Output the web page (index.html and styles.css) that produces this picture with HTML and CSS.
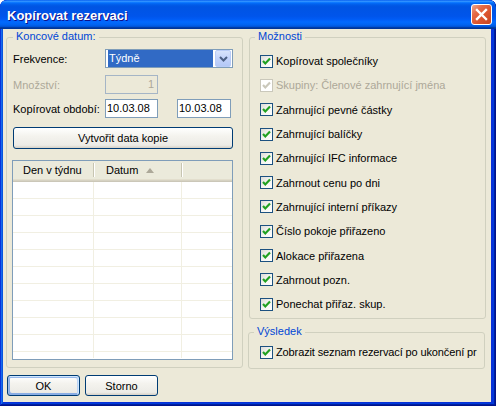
FILE: index.html
```html
<!DOCTYPE html>
<html lang="cs">
<head>
<meta charset="utf-8">
<title>Kopírovat rezervaci</title>
<link rel="stylesheet" href="styles.css">
</head>
<body>
<div class="window">
  <div class="titlebar">
    <span class="title">Kopírovat rezervaci</span>
    <span class="close">
      <svg width="13" height="13" viewBox="0 0 13 13"><path d="M2 2 L11 11 M11 2 L2 11" stroke="#fff" stroke-width="2.4" stroke-linecap="square"/></svg>
    </span>
  </div>
  <div class="client">
    <div class="top">
      <div class="group group-left">
        <span class="legend">Koncové datum:</span>
        <div class="row row-freq">
          <span class="lbl">Frekvence:</span>
          <div class="combo">
            <span class="combo-value">Týdně</span>
            <span class="combo-btn"><svg width="9" height="6" viewBox="0 0 9 6"><path d="M1 1 L4.5 4.5 L8 1" fill="none" stroke="#4D6185" stroke-width="2"/></svg></span>
          </div>
        </div>
        <div class="row row-qty">
          <span class="lbl disabled">Množství:</span>
          <div class="input input-disabled">1</div>
        </div>
        <div class="row row-period">
          <span class="lbl">Kopírovat období:</span>
          <div class="input">10.03.08</div>
          <div class="input input2">10.03.08</div>
        </div>
        <div class="btn btn-wide">Vytvořit data kopie</div>
        <div class="list">
          <div class="list-head">
            <span class="hc hc1">Den v týdnu</span><span class="hsep"></span>
            <span class="hc hc2">Datum<span class="sort"></span></span><span class="hsep"></span>
            <span class="hc hc3"></span>
          </div>
          <div class="list-body">
            <div class="lr"><span class="c1"></span><span class="c2"></span><span class="c3"></span></div>
            <div class="lr"><span class="c1"></span><span class="c2"></span><span class="c3"></span></div>
            <div class="lr"><span class="c1"></span><span class="c2"></span><span class="c3"></span></div>
            <div class="lr"><span class="c1"></span><span class="c2"></span><span class="c3"></span></div>
            <div class="lr"><span class="c1"></span><span class="c2"></span><span class="c3"></span></div>
            <div class="lr"><span class="c1"></span><span class="c2"></span><span class="c3"></span></div>
            <div class="lr"><span class="c1"></span><span class="c2"></span><span class="c3"></span></div>
            <div class="lr"><span class="c1"></span><span class="c2"></span><span class="c3"></span></div>
            <div class="lr"><span class="c1"></span><span class="c2"></span><span class="c3"></span></div>
            <div class="lr"><span class="c1"></span><span class="c2"></span><span class="c3"></span></div>
            <div class="lr lr-last"><span class="c1"></span><span class="c2"></span><span class="c3"></span></div>
          </div>
        </div>
      </div>
      <div class="right-col">
        <div class="group group-opts">
          <span class="legend">Možnosti</span>
          <div class="checks">
            <div class="chk"><span class="box"><svg width="11" height="11" viewBox="0 0 11 11"><path d="M2 5 L4.3 7.4 L9 2.6" fill="none" stroke="#21A121" stroke-width="2.2"/></svg></span><span class="ctext">Kopírovat společníky</span></div>
            <div class="chk chk-disabled"><span class="box"><svg width="11" height="11" viewBox="0 0 11 11"><path d="M2 5 L4.3 7.4 L9 2.6" fill="none" stroke="#CAC8BB" stroke-width="2.2"/></svg></span><span class="ctext">Skupiny: Členové zahrnující jména</span></div>
            <div class="chk"><span class="box"><svg width="11" height="11" viewBox="0 0 11 11"><path d="M2 5 L4.3 7.4 L9 2.6" fill="none" stroke="#21A121" stroke-width="2.2"/></svg></span><span class="ctext">Zahrnující pevné částky</span></div>
            <div class="chk"><span class="box"><svg width="11" height="11" viewBox="0 0 11 11"><path d="M2 5 L4.3 7.4 L9 2.6" fill="none" stroke="#21A121" stroke-width="2.2"/></svg></span><span class="ctext">Zahrnující balíčky</span></div>
            <div class="chk"><span class="box"><svg width="11" height="11" viewBox="0 0 11 11"><path d="M2 5 L4.3 7.4 L9 2.6" fill="none" stroke="#21A121" stroke-width="2.2"/></svg></span><span class="ctext">Zahrnující IFC informace</span></div>
            <div class="chk"><span class="box"><svg width="11" height="11" viewBox="0 0 11 11"><path d="M2 5 L4.3 7.4 L9 2.6" fill="none" stroke="#21A121" stroke-width="2.2"/></svg></span><span class="ctext">Zahrnout cenu po dni</span></div>
            <div class="chk"><span class="box"><svg width="11" height="11" viewBox="0 0 11 11"><path d="M2 5 L4.3 7.4 L9 2.6" fill="none" stroke="#21A121" stroke-width="2.2"/></svg></span><span class="ctext">Zahrnující interní příkazy</span></div>
            <div class="chk"><span class="box"><svg width="11" height="11" viewBox="0 0 11 11"><path d="M2 5 L4.3 7.4 L9 2.6" fill="none" stroke="#21A121" stroke-width="2.2"/></svg></span><span class="ctext">Číslo pokoje přiřazeno</span></div>
            <div class="chk"><span class="box"><svg width="11" height="11" viewBox="0 0 11 11"><path d="M2 5 L4.3 7.4 L9 2.6" fill="none" stroke="#21A121" stroke-width="2.2"/></svg></span><span class="ctext">Alokace přiřazena</span></div>
            <div class="chk"><span class="box"><svg width="11" height="11" viewBox="0 0 11 11"><path d="M2 5 L4.3 7.4 L9 2.6" fill="none" stroke="#21A121" stroke-width="2.2"/></svg></span><span class="ctext">Zahrnout pozn.</span></div>
            <div class="chk"><span class="box"><svg width="11" height="11" viewBox="0 0 11 11"><path d="M2 5 L4.3 7.4 L9 2.6" fill="none" stroke="#21A121" stroke-width="2.2"/></svg></span><span class="ctext">Ponechat přiřaz. skup.</span></div>
          </div>
        </div>
        <div class="group group-result">
          <span class="legend">Výsledek</span>
          <div class="chk chk-result"><span class="box"><svg width="11" height="11" viewBox="0 0 11 11"><path d="M2 5 L4.3 7.4 L9 2.6" fill="none" stroke="#21A121" stroke-width="2.2"/></svg></span><span class="ctext ctext-tight">Zobrazit seznam rezervací po ukončení pr</span></div>
        </div>
      </div>
    </div>
    <div class="buttons">
      <div class="btn btn-ok">OK</div>
      <div class="btn">Storno</div>
    </div>
  </div>
</div>
</body>
</html>
```
FILE: styles.css
```css
html, body {
  margin: 0;
  padding: 0;
  background: #ffffff;
}
body {
  font-family: "Liberation Sans", Arial, sans-serif;
  font-size: 11px;
  color: #000;
}
.window {
  width: 496px;
  height: 406px;
  box-sizing: border-box;
  display: flex;
  flex-direction: column;
  background: #0831D9;
  border-radius: 7px 7px 0 0;
  box-shadow: inset -1px -1px #00138C, inset 1px 1px #0831D9, inset -2px -2px #001EA0, inset 2px 2px #166AEE, inset -3px -3px #003BDA, inset 3px 3px #0855DD;
  overflow: hidden;
}
.titlebar {
  height: 29px;
  flex: none;
  display: flex;
  align-items: center;
  padding-left: 7px;
  border-radius: 7px 7px 0 0;
  background: linear-gradient(180deg, #0058EE 0%, #3593FF 4%, #288EFF 6%, #127DFF 8%, #036FFC 10%, #0262EE 14%, #0057E5 20%, #0054E3 24%, #0055EB 56%, #005BF5 66%, #026AFE 76%, #0062EF 86%, #0052D6 92%, #0040AB 94%, #003092 100%);
}
.title {
  color: #fff;
  font-weight: bold;
  font-size: 13px;
  text-shadow: 1px 1px #0F1089;
  padding-top: 1px;
}
.close {
  margin-left: auto;
  margin-right: 4px;
  width: 21px;
  height: 21px;
  box-sizing: border-box;
  border: 1px solid #fff;
  border-radius: 3px;
  display: flex;
  align-items: center;
  justify-content: center;
  background: linear-gradient(135deg, #ECA891 0%, #E66B47 30%, #DC5530 60%, #C7441F 100%);
}
.client {
  flex: 1;
  margin: 0 5px 4px 3px;
  background: #ECE9D8;
  padding-top: 8px;
}
.top {
  display: flex;
  align-items: flex-start;
  padding-left: 3px;
}
.group {
  box-sizing: border-box;
  border: 1px solid #D0D0BF;
  border-radius: 3px;
}
.legend {
  display: block;
  width: fit-content;
  margin: -8px 0 0 6px;
  padding: 0 3px;
  line-height: 13px;
  height: 13px;
  background: #ECE9D8;
  color: #0046D5;
}
.group-left {
  width: 237px;
  height: 331px;
}
.row {
  display: flex;
  align-items: center;
  height: 19px;
  margin-left: 6px;
}
.row-freq { margin-top: 6px; }
.row-qty { margin-top: 7px; }
.row-period { margin-top: 5px; }
.lbl {
  width: 92px;
  flex: none;
}
.disabled { color: #ACA899; }
.combo {
  width: 128px;
  height: 19px;
  box-sizing: border-box;
  border: 1px solid #7F9DB9;
  background: #fff;
  display: flex;
  padding: 0 1px;
  align-items: stretch;
}
.combo-value {
  flex: 1;
  margin: 0 2px 0 1px;
  background: #316AC5;
  color: #fff;
  line-height: 17px;
  padding-left: 1px;
}
.combo-btn {
  width: 16px;
  box-sizing: border-box;
  border: 1px solid #B9CCF7;
  border-radius: 2px;
  background: linear-gradient(180deg, #D8E4FC 0%, #C3D3FB 50%, #B4C8F6 100%);
  display: flex;
  align-items: center;
  justify-content: center;
}
.input {
  width: 53px;
  height: 19px;
  box-sizing: border-box;
  border: 1px solid #7F9DB9;
  background: #fff;
  line-height: 17px;
  padding-left: 1px;
}
.input-disabled {
  background: #ECE9D8;
  border-color: #A5B5C6;
  color: #ACA899;
  text-align: right;
  padding-right: 3px;
}
.input2 {
  width: 54px;
  margin-left: 19px;
}
.btn {
  box-sizing: border-box;
  border: 1px solid #003C74;
  border-radius: 3px;
  background: linear-gradient(180deg, #FFFFFF 0%, #F4F3EE 40%, #ECEBE6 86%, #D6D0C5 100%);
  display: flex;
  align-items: center;
  justify-content: center;
  color: #000;
}
.btn-wide {
  width: 220px;
  height: 22px;
  margin: 9px 0 0 6px;
}
.list {
  width: 221px;
  height: 200px;
  box-sizing: border-box;
  border: 1px solid #7F9DB9;
  margin: 11px 0 0 5px;
  background: #fff;
  display: flex;
  flex-direction: column;
  overflow: hidden;
}
.list-head {
  height: 21px;
  flex: none;
  display: flex;
  align-items: center;
  background: #EBEADB;
  box-shadow: inset 0 -1px #CBC7B8, inset 0 -2px #D6D2C2, inset 0 -3px #E2DECD;
}
.hc {
  display: flex;
  align-items: center;
  height: 18px;
  margin-bottom: 3px;
  box-sizing: border-box;
}
.hc1 { width: 80px; padding-left: 10px; }
.hc2 { width: 86px; padding-left: 11px; }
.hc3 { flex: 1; }
.hsep {
  width: 1px;
  height: 14px;
  margin-bottom: 3px;
  background: #C7C5B2;
  border-right: 1px solid #fff;
}
.sort {
  width: 0;
  height: 0;
  border-left: 4.5px solid transparent;
  border-right: 4.5px solid transparent;
  border-bottom: 5px solid #ACA899;
  margin-left: 8px;
}
.list-body {
  flex: 1;
  overflow: hidden;
}
.lr {
  display: flex;
  height: 17px;
  box-sizing: border-box;
  border-bottom: 1px solid #F1EFE2;
}
.lr-last { border-bottom: none; height: 6px; }
.lr span { display: block; box-sizing: border-box; }
.c1 { width: 81px; border-right: 1px solid #F1EFE2; }
.c2 { width: 88px; border-right: 1px solid #F1EFE2; }
.c3 { flex: 1; }
.right-col {
  display: flex;
  flex-direction: column;
  margin-left: 6px;
}
.group-opts {
  width: 237px;
  height: 282px;
}
.group-opts .legend { margin-left: 5px; }
.checks {
  margin-top: 6px;
}
.chk {
  display: flex;
  align-items: center;
  height: 24.3px;
  padding-left: 10px;
}
.box {
  width: 13px;
  height: 13px;
  box-sizing: border-box;
  border: 1px solid #1C5180;
  background: linear-gradient(135deg, #DCDCD7 0%, #F4F4F0 50%, #FFFFFF 100%);
  display: flex;
  align-items: center;
  justify-content: center;
  flex: none;
}
.ctext {
  margin-left: 3px;
  white-space: nowrap;
}
.chk-disabled .box {
  border-color: #CAC8BB;
  background: #fff;
}
.chk-disabled .ctext { color: #ACA899; }
.group-result {
  width: 237px;
  height: 37px;
  margin-top: 13px;
  margin-left: -1px;
}
.group-result .legend { margin-left: 5px; }
.chk-result {
  margin-top: 2px;
  padding-left: 11px;
}
.ctext-tight {
  letter-spacing: -0.12px;
}
.buttons {
  display: flex;
  gap: 5px;
  padding-left: 4px;
  margin-top: 6px;
}
.buttons .btn {
  width: 73px;
  height: 21px;
}
.btn-ok {
  box-shadow: inset -1px 1px #CEE7FF, inset 1px 2px #98B8EA, inset -2px 2px #BCD4F6, inset 1px -1px #89ADE4, inset 2px -2px #89ADE4;
}
```
